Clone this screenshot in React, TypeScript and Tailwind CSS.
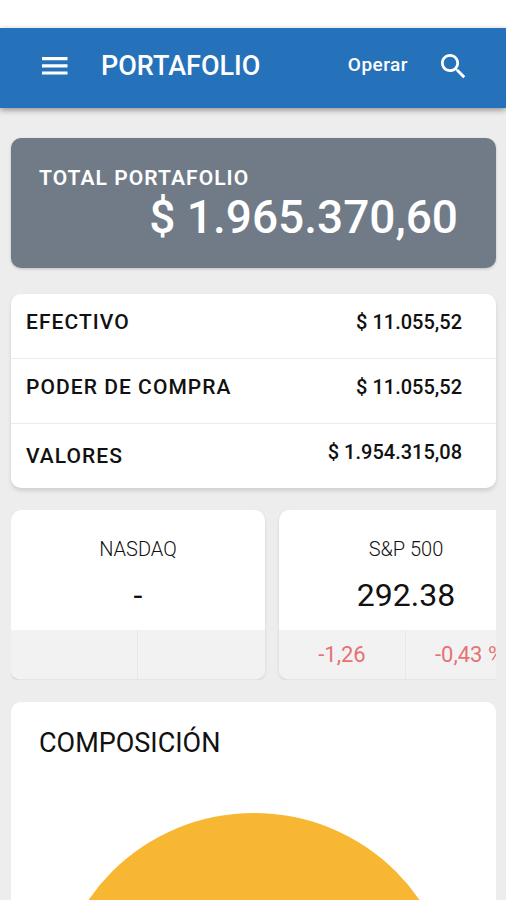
const balances = [
  { label: "EFECTIVO", amount: "$ 11.055,52", centered: false },
  { label: "PODER DE COMPRA", amount: "$ 11.055,52", centered: false },
  { label: "VALORES", amount: "$ 1.954.315,08", centered: true },
];

const indices = [
  { name: "NASDAQ", value: "-", change: "", percent: "" },
  { name: "S&P 500", value: "292.38", change: "-1,26", percent: "-0,43 %" },
];

function AppBar() {
  return (
    <header className="relative z-10 flex h-20 shrink-0 items-center bg-[#2672ba] px-10 pb-1 text-white shadow-[0_2px_6px_rgba(0,0,0,0.4)]">
      <button type="button" aria-label="Menú" className="shrink-0">
        <svg viewBox="0 0 28 18" className="h-[18px] w-7" fill="currentColor" aria-hidden="true">
          <path d="M2 0h25.500v3.200H2zM2 7.200h25.500v3.200H2zM2 14.400h25.500v3.200H2z" />
        </svg>
      </button>
      <h1 className="ml-[33px] text-[27px] leading-8 font-medium">PORTAFOLIO</h1>
      <button type="button" className="ml-auto pb-0.5 text-[19px] leading-6 font-medium tracking-wide">
        Operar
      </button>
      <button type="button" aria-label="Buscar" className="ml-[33px] shrink-0">
        <svg viewBox="3 3 18 18" className="size-[25px]" fill="currentColor" aria-hidden="true">
          <path d="M15.5 14h-.79l-.28-.27C15.41 12.59 16 11.11 16 9.5 16 5.91 13.09 3 9.5 3S3 5.91 3 9.5 5.91 16 9.5 16c1.61 0 3.09-.59 4.23-1.57l.27.28v.79l5 4.99L20.49 19l-4.99-5zm-6 0C7.01 14 5 11.99 5 9.5S7.01 5 9.5 5 14 7.01 14 9.5 11.99 14 9.5 14z" />
        </svg>
      </button>
    </header>
  );
}

function TotalCard() {
  return (
    <section className="rounded-[10px] bg-[#707b87] pt-7 pr-[38px] pb-6 pl-7 text-white shadow-[0_1px_3px_rgba(0,0,0,0.2)]">
      <h2 className="text-[21px] leading-6 font-semibold tracking-wider">TOTAL PORTAFOLIO</h2>
      <p className="text-right text-[46px] leading-[54px] font-medium">$ 1.965.370,60</p>
    </section>
  );
}

function BalanceCard() {
  return (
    <dl className="mt-[26px] divide-y divide-[#ebebeb] rounded-[10px] bg-white leading-6 font-medium text-[#111] shadow-[0_3px_4px_rgba(0,0,0,0.12)]">
      {balances.map((row) => (
        <div key={row.label} className="flex h-[65px] justify-between pr-[34px] pl-[15px] last:h-16">
          <dt className={row.centered ? "self-center text-[21px] leading-6 tracking-wider" : "pt-4 text-[21px] leading-6 tracking-wider"}>
            {row.label}
          </dt>
          <dd className="pt-4 text-xl leading-6">{row.amount}</dd>
        </div>
      ))}
    </dl>
  );
}

function IndexCards() {
  return (
    <section aria-label="Índices" className="mt-[22px] flex gap-3.5 overflow-hidden">
      {indices.map((item) => (
        <article
          key={item.name}
          className="w-[254px] shrink-0 overflow-hidden rounded-[10px] border-b border-[#e5e5e5] bg-white text-center text-[#111] shadow-[0_1px_3px_rgba(0,0,0,0.12)]"
        >
          <div className="h-[120px] pt-[27px]">
            <h3 className="text-xl leading-6 font-light">{item.name}</h3>
            <p className="mt-3.5 text-[32px] leading-10">{item.value}</p>
          </div>
          <div className="flex h-[49px] divide-x divide-[#e8e8e8] bg-[#f2f2f2] text-[22px] leading-[50px] text-[#e57373]">
            <span className="w-1/2">{item.change}</span>
            <span className="w-1/2">{item.percent}</span>
          </div>
        </article>
      ))}
    </section>
  );
}

function CompositionCard() {
  return (
    <section className="mt-[22px] rounded-[10px] bg-white px-7 pt-[25px] pb-10 text-[#111]">
      <h2 className="text-[27px] leading-8">COMPOSICIÓN</h2>
      <svg viewBox="0 0 402 402" className="mx-auto mt-[54px] w-[402px] max-w-full" role="img" aria-label="Composición">
        <circle cx="201" cy="201" r="201" fill="#f7b733" />
      </svg>
    </section>
  );
}

export default function App() {
  return (
    <div className="flex h-screen flex-col overflow-hidden bg-[#ededed] font-[Roboto,sans-serif]">
      <div className="h-7 shrink-0 bg-white" />
      <AppBar />
      <main className="min-h-0 flex-1 overflow-y-auto pt-[30px] pr-2.5 pb-6 pl-[11px] [scrollbar-width:none]">
        <TotalCard />
        <BalanceCard />
        <IndexCards />
        <CompositionCard />
      </main>
    </div>
  );
}
